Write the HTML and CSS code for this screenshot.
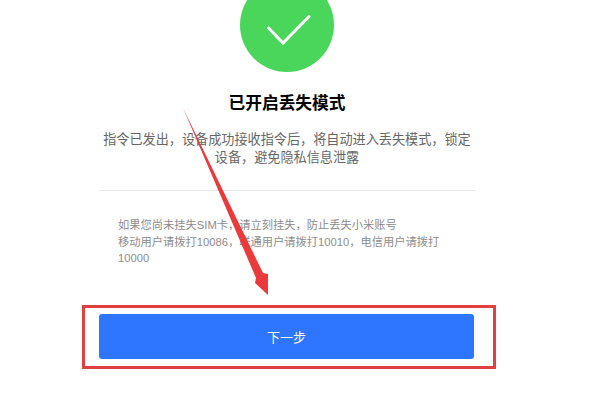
FILE: index.html
```html
<!DOCTYPE html>
<html lang="zh-CN">
<head>
<meta charset="utf-8">
<title>已开启丢失模式</title>
<link rel="stylesheet" href="styles.css">
</head>
<body>
<main class="page">
  <div class="status-icon">
    <svg viewBox="0 0 94 94" width="94" height="94" aria-hidden="true">
      <path class="check" d="M28.5 50 L43 65 L69 38.5" />
    </svg>
  </div>
  <h1 class="title">已开启丢失模式</h1>
  <p class="desc">指令已发出&#65292;设备成功接收指令后&#65292;将自动进入丢失模式&#65292;锁定设备&#65292;避免隐私信息泄露</p>
  <hr class="divider">
  <p class="note">如果您尚未挂失SIM卡&#65292;请立刻挂失&#65292;防止丢失小米账号<br>移动用户请拨打10086&#65292;联通用户请拨打10010&#65292;电信用户请拨打10000</p>
  <div class="action">
    <button class="next" type="button">下一步</button>
  </div>
</main>
<svg class="arrow" viewBox="0 0 600 400" width="600" height="400" aria-hidden="true">
  <polygon points="183,108 263,273 268,274 268,295 255,283 256,278" />
</svg>
</body>
</html>
```
FILE: styles.css
```css
* { box-sizing: border-box; }
html, body { margin: 0; height: 400px; overflow: hidden; background: #fff; }
body { font-family: "Liberation Sans", "Noto Sans CJK SC", sans-serif; position: relative; }
.page { width: 378px; margin: 0 0 0 98px; display: flex; flex-direction: column; align-items: center; }
.status-icon { width: 94px; height: 94px; margin-top: -22px; border-radius: 50%; background: #49d65a; flex: none; }
.status-icon svg { display: block; }
.check { fill: none; stroke: #fff; stroke-width: 3; stroke-linecap: round; stroke-linejoin: miter; }
.title { margin: 22px 0 0; font-size: 16.7px; line-height: 20px; font-weight: 700; color: #000; }
.desc { width: 377px; margin: 17px 0 0; font-size: 13.14px; line-height: 18px; color: #666; text-align: center; }
.divider { width: 377px; height: 1px; margin: 23px 0 0; border: 0; background: #e8e8e8; }
.note { width: 378px; margin: 26px 0 0; padding: 0 32px 0 20px; font-size: 11.25px; line-height: 16.5px; color: #8c8c8c; }
.action { display: flex; width: 414px; height: 64px; margin: 38px -22px 0 -16px; padding: 6px 19px 7px 14px; border: 3px solid #e0403f; flex: none; align-self: flex-start; }
.next { display: block; width: 375px; height: 45px; border: 0; border-radius: 3px; background: #2e75ff; color: #fff; font: 13px/45px "Liberation Sans", "Noto Sans CJK SC", sans-serif; }
.arrow { position: absolute; left: 0; top: 0; pointer-events: none; }
.arrow polygon { fill: #ea3a3c; }
```
